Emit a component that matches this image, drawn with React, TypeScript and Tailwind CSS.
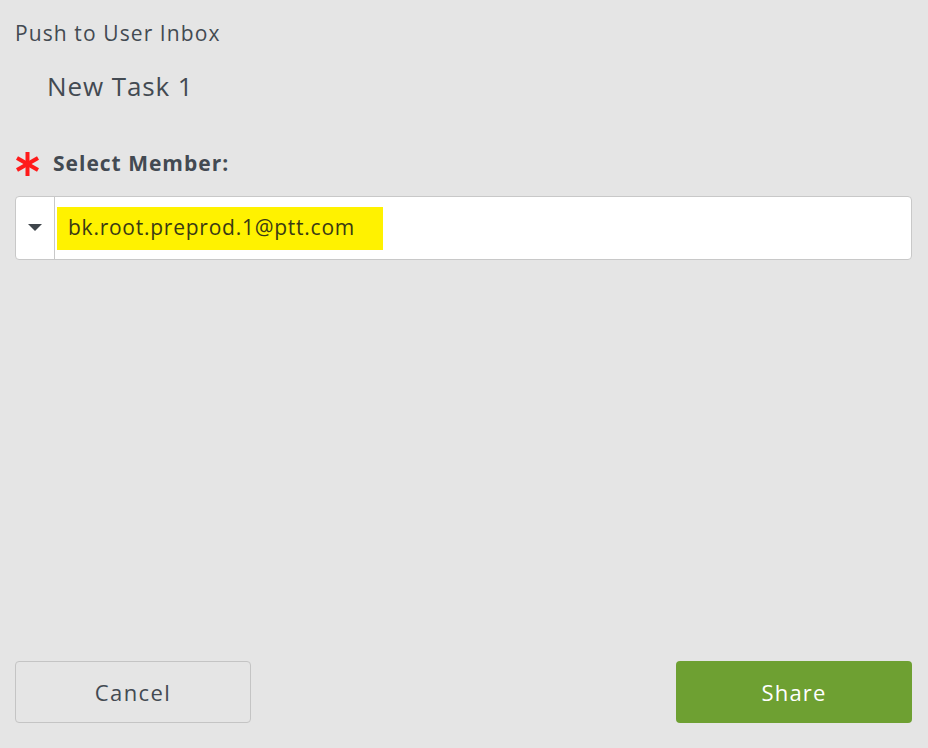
import { useState } from "react";

export default function App() {
  const [member] = useState("bk.root.preprod.1@ptt.com");

  return (
    <div
      className="w-[928px] h-[748px] bg-[#e5e5e5] flex flex-col pl-[15px] pr-[16px] text-[#434a52]"
      style={{ fontFamily: "'Open Sans', Lato, sans-serif" }}
    >
      {/* Title */}
      <div className="pt-[20px] text-[21px] leading-[26px] tracking-[1.1px]">Push to User Inbox</div>
      <div className="pl-[32px] pt-[24px] text-[26px] leading-[32px] tracking-[0.9px]">New Task 1</div>

      {/* Member field */}
      <div className="mt-[47px] flex items-center gap-[13px] h-[30px]">
        <svg width="25" height="26" viewBox="0 0 25 26" className="shrink-0">
          <g stroke="#ff1a1a" strokeWidth="4" strokeLinecap="butt">
            <line x1="12.5" y1="1" x2="12.5" y2="25" />
            <line x1="2" y1="7" x2="23" y2="19" />
            <line x1="2" y1="19" x2="23" y2="7" />
          </g>
        </svg>
        <span className="text-[21px] font-bold tracking-[1px]">Select Member:</span>
      </div>

      <div className="mt-[17px] h-[64px] flex bg-white border border-[#c8c8c8] rounded-[4px]">
        <button className="w-[39px] shrink-0 flex items-center justify-center border-r border-[#c8c8c8]">
          <svg width="14" height="8" viewBox="0 0 14 8">
            <path d="M0 0 L14 0 L7 7 Z" fill="#3f454b" />
          </svg>
        </button>
        <div className="flex items-center pl-[2px]">
          <span className="bg-[#fff200] h-[43px] w-[326px] flex items-center pl-[11px] text-[21px] tracking-[0.75px] text-[#3a3a14]">
            {member}
          </span>
        </div>
      </div>

      <div className="flex-1" />

      {/* Footer */}
      <div className="flex justify-between pb-[25px]">
        <button className="w-[236px] h-[62px] border border-[#c4c4c4] rounded-[4px] text-[22px] tracking-[1.4px] text-[#434a52]">
          Cancel
        </button>
        <button className="w-[236px] h-[62px] bg-[#6ea032] rounded-[4px] text-[22px] tracking-[1.2px] text-white">
          Share
        </button>
      </div>
    </div>
  );
}
